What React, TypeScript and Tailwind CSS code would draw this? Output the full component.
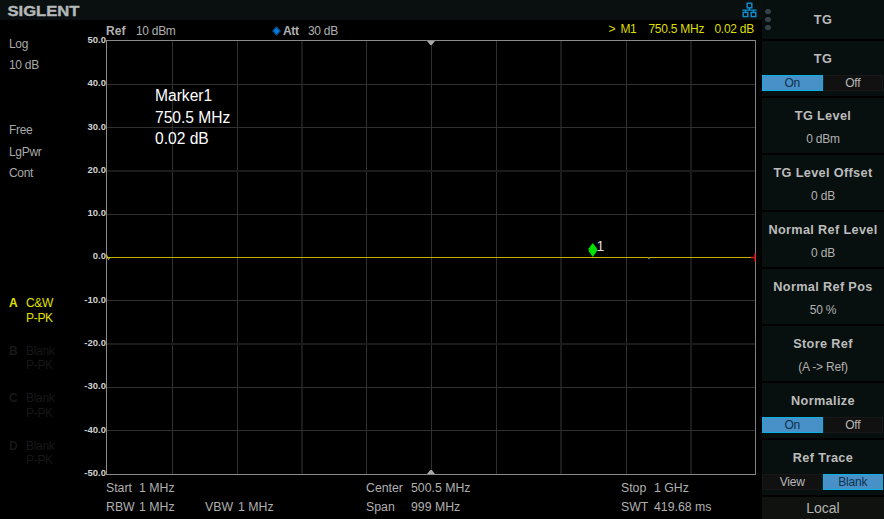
import React from 'react';
import clsx from 'clsx';

interface TraceInfo {
  name: string;
  mode: string;
  detector: string;
  active?: boolean;
}

interface MenuItem {
  title: string;
  value?: string;
  options?: [string, string];
  selected?: number;
}

const Y_LABELS = ['50.0', '40.0', '30.0', '20.0', '10.0', '0.0', '-10.0', '-20.0', '-30.0', '-40.0', '-50.0'];

const TRACES: TraceInfo[] = [
  { name: 'A', mode: 'C&W', detector: 'P-PK', active: true },
  { name: 'B', mode: 'Blank', detector: 'P-PK' },
  { name: 'C', mode: 'Blank', detector: 'P-PK' },
  { name: 'D', mode: 'Blank', detector: 'P-PK' },
];

const MENU: MenuItem[] = [
  { title: 'TG', options: ['On', 'Off'], selected: 0 },
  { title: 'TG Level', value: '0 dBm' },
  { title: 'TG Level Offset', value: '0 dB' },
  { title: 'Normal Ref Level', value: '0 dB' },
  { title: 'Normal Ref Pos', value: '50 %' },
  { title: 'Store Ref', value: '(A -> Ref)' },
  { title: 'Normalize', options: ['On', 'Off'], selected: 0 },
  { title: 'Ref Trace', options: ['View', 'Blank'], selected: 1 },
];

const GRID_X = [66, 131, 195.5, 260, 325, 390, 454.5, 520, 584.5];
const GRID_Y = [44, 87, 130.5, 174, 260, 303.5, 347, 390];

const NetworkIcon: React.FC = () => (
  <svg width="15" height="16" viewBox="0 0 15 16" fill="none" stroke="#0f8fd0" strokeWidth="1.4">
    <rect x="5.2" y="1.2" width="4.6" height="4.6" />
    <rect x="1.2" y="10.4" width="4.6" height="4.2" />
    <rect x="9.2" y="10.4" width="4.6" height="4.2" />
    <path d="M7.5 6V8M0.3 8.1H14.7M3.5 8V10.4M11.5 8V10.4" />
  </svg>
);

const Header: React.FC = () => (
  <div className="flex h-5 items-center justify-between bg-[#09100f] pr-[5px] pl-[7px]">
    <svg width="76" height="18" className="mt-[2px]">
      <text
        x="0.5"
        y="14.3"
        textLength="72"
        lengthAdjust="spacingAndGlyphs"
        fill="#b4b8b8"
        stroke="#b4b8b8"
        strokeWidth="0.4"
        fontSize="15.5"
        fontWeight="bold"
        fontFamily="Liberation Sans, sans-serif"
      >
        SIGLENT
      </text>
    </svg>
    <NetworkIcon />
  </div>
);

const StatusColumn: React.FC = () => (
  <div className="flex w-[70px] flex-col pl-[9px] text-[12px] tracking-[-0.3px] text-[#a9a9a9]">
    <div className="mt-[14px] h-[86px] leading-[21px]">
      <div>Log</div>
      <div>10 dB</div>
    </div>
    <div className="h-[157px] leading-[21.6px]">
      <div>Free</div>
      <div>LgPwr</div>
      <div>Cont</div>
    </div>
    <div className="mt-[19px] leading-[14.6px] tracking-[-0.3px]">
      {TRACES.map((trace) => (
        <div key={trace.name} className={clsx('flex h-[47.5px]', trace.active ? 'text-[#e0e000]' : 'text-[#171717]')}>
          <span className="w-[17px] font-bold">{trace.name}</span>
          <div>
            <div>{trace.mode}</div>
            <div>{trace.detector}</div>
          </div>
        </div>
      ))}
    </div>
  </div>
);

const Plot: React.FC = () => (
  <div className="relative h-[435px]">
    <svg width="651" height="435" className="block">
      {GRID_X.map((x) => (
        <rect key={x} x={x - (x % 1 ? 0.5 : 0)} y="1" width={x % 1 ? 2 : 1} height="433" fill={x % 1 ? '#1b1b1b' : '#303030'} />
      ))}
      {GRID_Y.map((y) => (
        <rect key={y} x="1" y={y - (y % 1 ? 0.5 : 0)} width="649" height={y % 1 ? 2 : 1} fill={y % 1 ? '#1b1b1b' : '#303030'} />
      ))}
      <path d="M0 0.5H650M0.5 0V434.5M0 434H650" stroke="#8a8a8a" fill="none" shapeRendering="crispEdges" />
      <path d="M649.5 0V434" stroke="#808080" />
      <path d="M321 1H329L325.8 5H324.2Z" fill="#a8a8a8" />
      <path d="M321 434H329L325.8 430H324.2Z" fill="#a8a8a8" />
      <rect x="1" y="217" width="644" height="1" fill="#bcb600" />
      <path d="M0.5 215L2.5 219.5L3.5 217.5" stroke="#d8d800" fill="none" />
      <rect x="542" y="217" width="2" height="2" fill="#8a8a10" />
      <path d="M645 217.5H649M649 213.5V221.5" stroke="#e01010" strokeWidth="1.3" />
      <path d="M486.8 203L491 208.5V211L486.8 217L482.6 211V208.5Z" fill="#00e000" />
      <text x="490.5" y="211" fill="#dedede" fontSize="14" fontFamily="Liberation Sans, sans-serif">
        1
      </text>
    </svg>
    <div className="absolute top-[45px] left-[49px] text-[15.6px] leading-[21.6px] whitespace-nowrap text-white">
      <div>Marker1</div>
      <div>750.5 MHz</div>
      <div>0.02 dB</div>
    </div>
  </div>
);

const Readouts: React.FC = () => (
  <div className="flex h-5 items-center pt-px text-[12px] leading-5 tracking-[-0.3px] whitespace-nowrap text-[#b0b0b0]">
    <span className="w-[30px] font-bold tracking-[0.1px]">Ref</span>
    <span className="w-[135px]">10 dBm</span>
    <svg width="11" height="10" className="mr-px">
      <path d="M5.5 0L10 5L5.5 10L1 5Z" fill="#074a87" />
      <path d="M5.5 2L8.5 5L5.5 8L2.5 5Z" fill="#0878d8" />
    </svg>
    <span className="w-[25px] font-bold">Att</span>
    <span className="flex-1">30 dB</span>
    <div className="-mt-[3px] flex pr-[2px] text-[12px] tracking-[-0.25px] text-[#dede00]">
      <span className="w-3">&gt;</span>
      <span className="w-7">M1</span>
      <span className="w-[66px]">750.5 MHz</span>
      <span>0.02 dB</span>
    </div>
  </div>
);

const Footer: React.FC = () => (
  <div className="pt-[4px] text-[12.3px] leading-[19px] whitespace-nowrap text-[#b0b0b0]">
    <div className="flex">
      <span className="w-[33px]">Start</span>
      <span className="w-[227px]">1 MHz</span>
      <span className="w-[45px]">Center</span>
      <span className="w-[210px]">500.5 MHz</span>
      <span className="w-[33px]">Stop</span>
      <span>1 GHz</span>
    </div>
    <div className="flex">
      <span className="w-[33px]">RBW</span>
      <span className="w-[66px]">1 MHz</span>
      <span className="w-[33px]">VBW</span>
      <span className="w-[128px]">1 MHz</span>
      <span className="w-[45px]">Span</span>
      <span className="w-[210px]">999 MHz</span>
      <span className="w-[33px]">SWT</span>
      <span>419.68 ms</span>
    </div>
  </div>
);

const MenuButton: React.FC<{ item: MenuItem }> = ({ item }) => (
  <div className="flex h-[55px] shrink-0 flex-col bg-[#08100f] text-center">
    <div className="mt-[10px] h-[16px] text-[12.7px] leading-[17px] font-bold tracking-[0.35px] whitespace-nowrap text-[#bcbcbc]">
      {item.title}
    </div>
    {item.value && <div className="mt-[7px] text-[12px] leading-4 tracking-[-0.2px] text-[#b0b0b0]">{item.value}</div>}
    {item.options && (
      <div className="mt-[8px] mr-px flex h-4 text-[12px] leading-[15px] tracking-[-0.2px]">
        {item.options.map((option, i) => (
          <div
            key={option}
            className={clsx(
              'flex-1 border',
              i === item.selected ? 'border-[#08b0e4] bg-[#4890c8] text-[#10304c]' : 'border-[#181818] bg-[#111111] leading-[14px] text-[#b8b8b8]'
            )}
          >
            {option}
          </div>
        ))}
      </div>
    )}
  </div>
);

const Sidebar: React.FC = () => (
  <div className="flex w-[122px] flex-col gap-[2px] bg-black">
    <div className="flex h-[39px] shrink-0 items-center bg-[#08100f]">
      <div className="flex w-3 flex-col items-center gap-[2.4px]">
        <span className="size-[5.3px] rounded-full bg-[#35424a]" />
        <span className="size-[5.3px] rounded-full bg-[#35424a]" />
        <span className="size-[5.3px] rounded-full bg-[#35424a]" />
      </div>
      <div className="flex-1 pt-[2px] pr-3 text-center text-[12.7px] font-bold tracking-[0.35px] text-[#bcbcbc]">TG</div>
    </div>
    {MENU.map((item) => (
      <MenuButton key={item.title} item={item} />
    ))}
    <div className="h-[22px] bg-[#10120f] text-center text-[14px] leading-[22px] text-[#b4b4b4]">Local</div>
  </div>
);

const App: React.FC = () => {
  return (
    <div className="flex h-[519px] w-[884px] overflow-hidden bg-black font-['Liberation_Sans',sans-serif]">
      <div className="w-[762px]">
        <Header />
        <div className="flex">
          <StatusColumn />
          <div className="flex h-[459px] w-[36px] flex-col justify-between pt-[14px] text-right text-[9.5px] font-bold text-[#d0d0d0]">
            {Y_LABELS.map((label) => (
              <div key={label} className="h-3 shrink-0 leading-3">
                {label}
              </div>
            ))}
          </div>
          <div className="w-[650px]">
            <Readouts />
            <Plot />
            <Footer />
          </div>
        </div>
      </div>
      <Sidebar />
    </div>
  );
};

export default App;
